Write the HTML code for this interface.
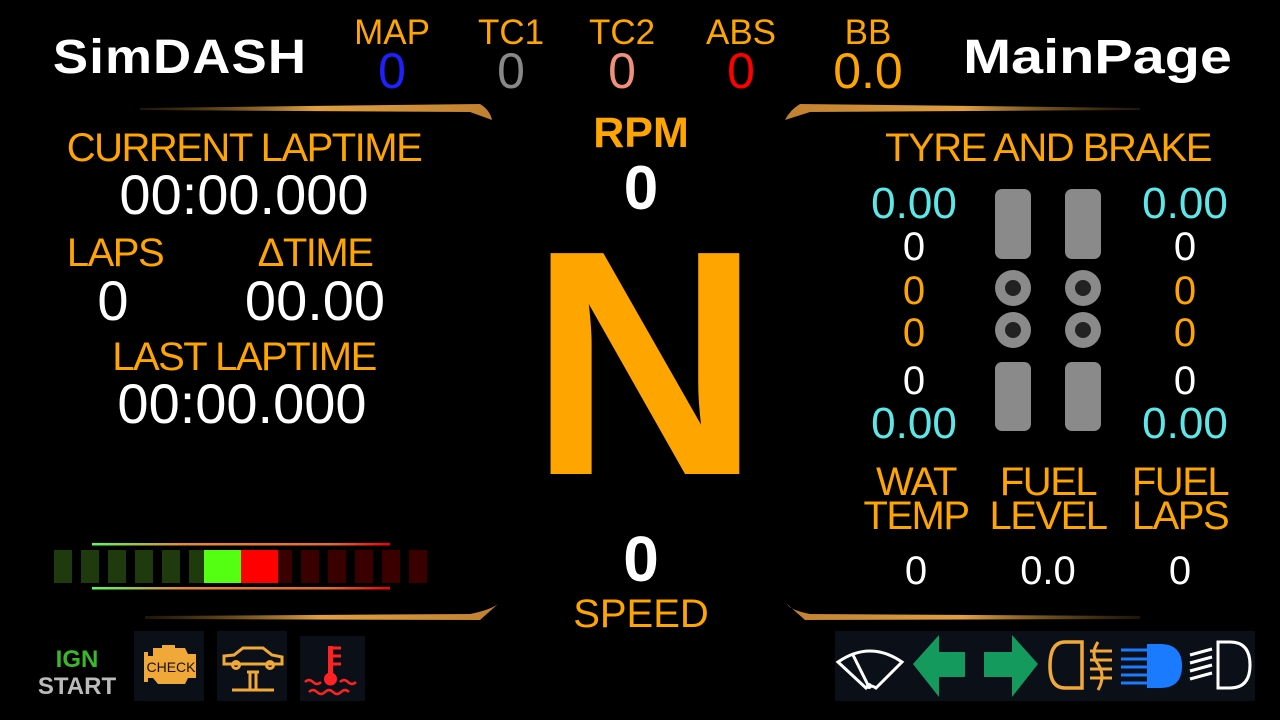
<!DOCTYPE html>
<html><head><meta charset="utf-8"><style>
body{margin:0;background:#000;width:1280px;height:720px;overflow:hidden;position:relative;font-family:"Liberation Sans",sans-serif}
.t{position:absolute;text-align:center;white-space:nowrap;line-height:1}
.o{color:#FFA500}.w{color:#fff}.c{color:#5ce8e8}
.lbl{font-size:40px;letter-spacing:-1.5px}
.val{font-size:56px}
</style></head><body>
<div class="t w" style="left:40px;top:34px;width:280px;font-size:48px;font-weight:bold;letter-spacing:1px;transform:scaleX(1.1)">SimDASH</div>
<div class="t w" style="left:950px;top:34px;width:295px;font-size:48px;font-weight:bold;transform:scaleX(1.2)">MainPage</div>

<div class="t o" style="left:342px;top:15px;width:100px;font-size:35px">MAP</div>
<div class="t" style="left:342px;top:46px;width:100px;font-size:50px;color:#2020ff">0</div>
<div class="t o" style="left:461px;top:15px;width:100px;font-size:35px">TC1</div>
<div class="t" style="left:461px;top:46px;width:100px;font-size:50px;color:#888">0</div>
<div class="t o" style="left:572px;top:15px;width:100px;font-size:35px">TC2</div>
<div class="t" style="left:572px;top:46px;width:100px;font-size:50px;color:#f0907a">0</div>
<div class="t o" style="left:691px;top:15px;width:100px;font-size:35px">ABS</div>
<div class="t" style="left:691px;top:46px;width:100px;font-size:50px;color:#f00">0</div>
<div class="t o" style="left:818px;top:15px;width:100px;font-size:35px">BB</div>
<div class="t o" style="left:808px;top:46px;width:120px;font-size:50px">0.0</div>

<svg style="position:absolute;left:0;top:0" width="1280" height="720">
<defs><linearGradient id="g" x1="0" x2="1"><stop offset="0" stop-color="#6b4a18" stop-opacity=".3"/><stop offset=".5" stop-color="#e0a040"/><stop offset="1" stop-color="#c08030"/></linearGradient>
<linearGradient id="g2" x1="1" x2="0"><stop offset="0" stop-color="#6b4a18" stop-opacity=".3"/><stop offset=".5" stop-color="#e0a040"/><stop offset="1" stop-color="#c08030"/></linearGradient>
<linearGradient id="sl" x1="0" x2="1"><stop offset="0" stop-color="#5f5"/><stop offset=".3" stop-color="#e98a3a"/><stop offset=".8" stop-color="#e86a30"/><stop offset="1" stop-color="#e00"/></linearGradient></defs>
<path d="M140 108 L480 104 Q490 110 492 120 L470 112 L140 110Z" fill="url(#g)"/>
<path d="M1140 108 L800 104 Q790 110 785 120 L810 112 L1140 110Z" fill="url(#g2)"/>
<path d="M145 616 L470 614 Q490 610 498 604 L480 620 L145 619Z" fill="url(#g)"/>
<path d="M1140 616 L810 614 Q790 610 787 604 L805 620 L1140 619Z" fill="url(#g2)"/>
<rect x="92" y="543" width="298" height="2.5" fill="url(#sl)"/>
<rect x="92" y="587" width="298" height="2.5" fill="url(#sl)"/>
<g fill="#1f3a0c">
<rect x="54" y="550" width="18" height="33"/><rect x="81" y="550" width="18" height="33"/><rect x="108" y="550" width="18" height="33"/><rect x="135" y="550" width="18" height="33"/><rect x="162" y="550" width="18" height="33"/><rect x="189" y="550" width="15" height="33"/></g>
<rect x="204" y="550" width="37" height="33" fill="#55ff11"/>
<rect x="241" y="550" width="37" height="33" fill="#f00"/>
<g fill="#3a0000"><rect x="278" y="550" width="14" height="33"/><rect x="301" y="550" width="18" height="33"/><rect x="328" y="550" width="18" height="33"/><rect x="355" y="550" width="18" height="33"/><rect x="382" y="550" width="18" height="33"/><rect x="409" y="550" width="18" height="33"/></g>

<g fill="#8a8a8a"><rect x="995" y="189" width="36" height="70" rx="7"/><rect x="1065" y="189" width="36" height="70" rx="7"/><rect x="995" y="362" width="36" height="69" rx="7"/><rect x="1065" y="362" width="36" height="69" rx="7"/>
<circle cx="1013" cy="288" r="18"/><circle cx="1083" cy="288" r="18"/><circle cx="1013" cy="330" r="18"/><circle cx="1083" cy="330" r="18"/></g>
<g fill="#222"><circle cx="1013" cy="288" r="8"/><circle cx="1083" cy="288" r="8"/><circle cx="1013" cy="330" r="8"/><circle cx="1083" cy="330" r="8"/></g>

<rect x="134" y="631" width="70" height="70" fill="#0b1018"/>
<rect x="217" y="631" width="70" height="70" fill="#0b1018"/>
<rect x="300" y="636" width="65" height="65" fill="#0b1018"/>
<path d="M144 652 L148 652 L148 656 L153 656 L153 648 L162 648 L162 645 L175 645 L175 648 L185 648 L188 654 L196 654 L196 678 L188 678 L185 684 L158 684 L153 678 L148 678 L148 682 L144 682Z" fill="#f0a838"/>
<text x="171" y="672" font-family="Liberation Sans" font-size="14" fill="#1a1208" text-anchor="middle">CHECK</text>
<g stroke="#f0a838" stroke-width="3" fill="none"><path d="M224 664 L224 656 L234 655 L243 648 L263 648 L272 655 L282 657 L282 664 L224 664Z"/><circle cx="236" cy="665" r="3.5"/><circle cx="270" cy="665" r="3.5"/><path d="M247 672 L259 672 M250 672 L250 690 M256 672 L256 690 M232 690 L274 690"/></g>
<g fill="#f22" stroke="#f22"><rect x="328" y="646" width="5" height="30" stroke="none"/><circle cx="330.5" cy="679" r="6"/><path d="M333 648h8M333 656h8M333 664h8" stroke-width="3"/>
<path d="M305 682 q4 -4 8 0 t8 0 M340 682 q4 -4 8 0 t8 0 M309 692 q4 -4 8 0 t8 0 t8 0 t8 0 t8 0" fill="none" stroke-width="2.5"/></g>

<rect x="835" y="631" width="420" height="70" fill="#0b1018"/>
<g stroke="#fff" stroke-width="3" fill="none"><path d="M838 662 Q870 640 902 662 L876 688 Q870 684 866 688Z"/><path d="M853 655 L869 687"/></g>
<circle cx="869" cy="686" r="3" fill="#fff"/>
<path d="M913 664 L939 635 L939 652 L965 652 L965 677 L939 677 L939 697Z" fill="#159a5e"/>
<path d="M1038 664 L1012 635 L1012 652 L984 652 L984 677 L1012 677 L1012 697Z" fill="#159a5e"/>
<path d="M1065 642 Q1050 642 1050 666 Q1050 688 1065 688 L1082 688 L1082 642Z" fill="none" stroke="#f0a838" stroke-width="3.5"/>
<g stroke="#f0a838" stroke-width="3"><path d="M1098 642 Q1090 654 1098 664 Q1106 676 1098 690" fill="none"/><path d="M1090 651h22M1090 660h22M1090 669h22M1090 678h22"/></g>
<g stroke="#1a7bff" stroke-width="3"><path d="M1121 650h26M1121 659h26M1121 667h26M1121 675h26M1121 683h26"/></g>
<path d="M1147 644 L1160 644 Q1182 644 1182 666 Q1182 688 1160 688 L1147 688Z" fill="#1a7bff"/>
<g stroke="#fff" stroke-width="3"><path d="M1190 655l22 -6M1190 663l22 -6M1190 671l22 -6M1190 679l22 -6"/></g>
<path d="M1218 642 L1230 642 Q1250 642 1250 665 Q1250 688 1230 688 L1218 688Z" fill="none" stroke="#fff" stroke-width="3"/>
</svg>

<div class="t o lbl" style="left:44px;top:128px;width:400px">CURRENT LAPTIME</div>
<div class="t w val" style="left:44px;top:167px;width:400px">00:00.000</div>
<div class="t o lbl" style="left:45px;top:233px;width:140px">LAPS</div>
<div class="t w val" style="left:53px;top:273px;width:120px">0</div>
<div class="t o lbl" style="left:235px;top:233px;width:160px">ΔTIME</div>
<div class="t w val" style="left:225px;top:273px;width:180px">00.00</div>
<div class="t o lbl" style="left:44px;top:337px;width:400px">LAST LAPTIME</div>
<div class="t w val" style="left:42px;top:376px;width:400px">00:00.000</div>

<div class="t o" style="left:541px;top:112px;width:200px;font-size:43px;font-weight:bold">RPM</div>
<div class="t w" style="left:541px;top:158px;width:200px;font-size:62px;font-weight:bold">0</div>
<div class="t o" style="left:500px;top:203px;width:290px;font-size:321px;font-weight:bold;transform:scaleX(1.0)">N</div>
<div class="t w" style="left:541px;top:527px;width:200px;font-size:64px;font-weight:bold">0</div>
<div class="t o" style="left:541px;top:594px;width:200px;font-size:40px">SPEED</div>

<div class="t o lbl" style="left:848px;top:128px;width:400px">TYRE AND BRAKE</div>
<div class="t c" style="left:844px;top:182px;width:140px;font-size:44px">0.00</div>
<div class="t c" style="left:1115px;top:182px;width:140px;font-size:44px">0.00</div>
<div class="t w" style="left:844px;top:227px;width:140px;font-size:40px">0</div>
<div class="t w" style="left:1115px;top:227px;width:140px;font-size:40px">0</div>
<div class="t o" style="left:844px;top:271px;width:140px;font-size:40px">0</div>
<div class="t o" style="left:1115px;top:271px;width:140px;font-size:40px">0</div>
<div class="t o" style="left:844px;top:313px;width:140px;font-size:40px">0</div>
<div class="t o" style="left:1115px;top:313px;width:140px;font-size:40px">0</div>
<div class="t w" style="left:844px;top:361px;width:140px;font-size:40px">0</div>
<div class="t w" style="left:1115px;top:361px;width:140px;font-size:40px">0</div>
<div class="t c" style="left:844px;top:402px;width:140px;font-size:44px">0.00</div>
<div class="t c" style="left:1115px;top:402px;width:140px;font-size:44px">0.00</div>

<div class="t o lbl" style="left:846px;top:465px;width:140px;line-height:34px">WAT<br>TEMP</div>
<div class="t o lbl" style="left:978px;top:465px;width:140px;line-height:34px">FUEL<br>LEVEL</div>
<div class="t o lbl" style="left:1110px;top:465px;width:140px;line-height:34px">FUEL<br>LAPS</div>
<div class="t w" style="left:846px;top:551px;width:140px;font-size:40px">0</div>
<div class="t w" style="left:978px;top:551px;width:140px;font-size:40px">0.0</div>
<div class="t w" style="left:1110px;top:551px;width:140px;font-size:40px">0</div>

<div class="t" style="left:28px;top:648px;width:98px;font-size:24px;font-weight:bold;color:#3ab82a">IGN</div>
<div class="t" style="left:28px;top:675px;width:98px;font-size:24px;font-weight:bold;color:#bbb">START</div>
</body></html>
